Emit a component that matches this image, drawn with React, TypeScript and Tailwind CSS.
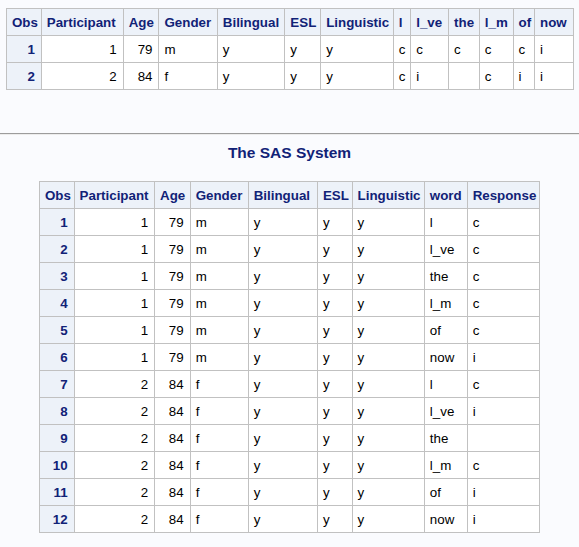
import React from 'react';

type Col = { label: string; w: string; num?: boolean };

const wideCols: Col[] = [
  { label: 'Obs', w: 'w-[34px]', num: true },
  { label: 'Participant', w: 'w-[80px]', num: true },
  { label: 'Age', w: 'w-[35px]', num: true },
  { label: 'Gender', w: 'w-[57px]' },
  { label: 'Bilingual', w: 'w-[66px]' },
  { label: 'ESL', w: 'w-[35px]' },
  { label: 'Linguistic', w: 'w-[71px]' },
  { label: 'l', w: 'w-[17px]' },
  { label: 'l_ve', w: 'w-[37px]' },
  { label: 'the', w: 'w-[30px]' },
  { label: 'l_m', w: 'w-[33px]' },
  { label: 'of', w: 'w-[21px]' },
  { label: 'now', w: 'w-[38px]' },
];

const wideRows = [
  ['1', '1', '79', 'm', 'y', 'y', 'y', 'c', 'c', 'c', 'c', 'c', 'i'],
  ['2', '2', '84', 'f', 'y', 'y', 'y', 'c', 'i', '', 'c', 'i', 'i'],
];

const longCols: Col[] = [
  { label: 'Obs', w: 'w-[34px]', num: true },
  { label: 'Participant', w: 'w-[79px]', num: true },
  { label: 'Age', w: 'w-[35px]', num: true },
  { label: 'Gender', w: 'w-[57px]' },
  { label: 'Bilingual', w: 'w-[68px]' },
  { label: 'ESL', w: 'w-[34px]' },
  { label: 'Linguistic', w: 'w-[71px]' },
  { label: 'word', w: 'w-[42px]' },
  { label: 'Response', w: 'w-[71px]' },
];

const words = ['l', 'l_ve', 'the', 'l_m', 'of', 'now'];
const resp = [
  ['c', 'c', 'c', 'c', 'c', 'i'],
  ['c', 'i', '', 'c', 'i', 'i'],
];

const longRows: string[][] = [];
[0, 1].forEach((p) => {
  words.forEach((w, i) => {
    const n = p * 6 + i + 1;
    longRows.push([
      String(n),
      String(p + 1),
      p === 0 ? '79' : '84',
      p === 0 ? 'm' : 'f',
      'y',
      'y',
      'y',
      w,
      resp[p][i],
    ]);
  });
});

function SasTable({ cols, rows, width }: { cols: Col[]; rows: string[][]; width: string }) {
  return (
    <table
      className={`${width} table-fixed border-separate border-spacing-0 border-l border-t border-[#c1c1c1] text-[13.33px] leading-[15px]`}
    >
      <thead>
        <tr>
          {cols.map((c) => (
            <th
              key={c.label}
              className={`${c.w} h-[27px] px-[5px] border-r border-b border-[#c1c1c1] bg-[#edf2f9] text-[#112277] font-bold text-left align-middle whitespace-nowrap`}
            >
              {c.label}
            </th>
          ))}
        </tr>
      </thead>
      <tbody>
        {rows.map((r, ri) => (
          <tr key={ri}>
            {r.map((v, ci) =>
              ci === 0 ? (
                <th
                  key={ci}
                  className="h-[27px] px-[6px] border-r border-b border-[#c1c1c1] bg-[#edf2f9] text-[#112277] font-bold text-right align-middle"
                >
                  {v}
                </th>
              ) : (
                <td
                  key={ci}
                  className={`h-[27px] pl-[5px] pr-[6px] border-r border-b border-[#c1c1c1] bg-white text-black align-middle whitespace-nowrap ${
                    cols[ci].num ? 'text-right' : 'text-left'
                  }`}
                >
                  {v}
                </td>
              )
            )}
          </tr>
        ))}
      </tbody>
    </table>
  );
}

export default function App() {
  return (
    <div className="w-[579px] h-[547px] overflow-hidden bg-[#fafbfe] font-['Liberation_Sans',Arial,sans-serif]">
      <div className="pt-[8px] pl-[6px]">
        <SasTable cols={wideCols} rows={wideRows} width="w-[568px]" />
      </div>

      {/* page break */}
      <div className="mt-[43px] border-t border-b border-t-[#9c9c9c] border-b-[#ececec]" />

      <h1 className="mt-[9px] text-center text-[15.5px] leading-[18px] font-bold text-[#112277]">
        The SAS System
      </h1>

      <div className="mt-[19px] pl-[39px]">
        <SasTable cols={longCols} rows={longRows} width="w-[501px]" />
      </div>
    </div>
  );
}
